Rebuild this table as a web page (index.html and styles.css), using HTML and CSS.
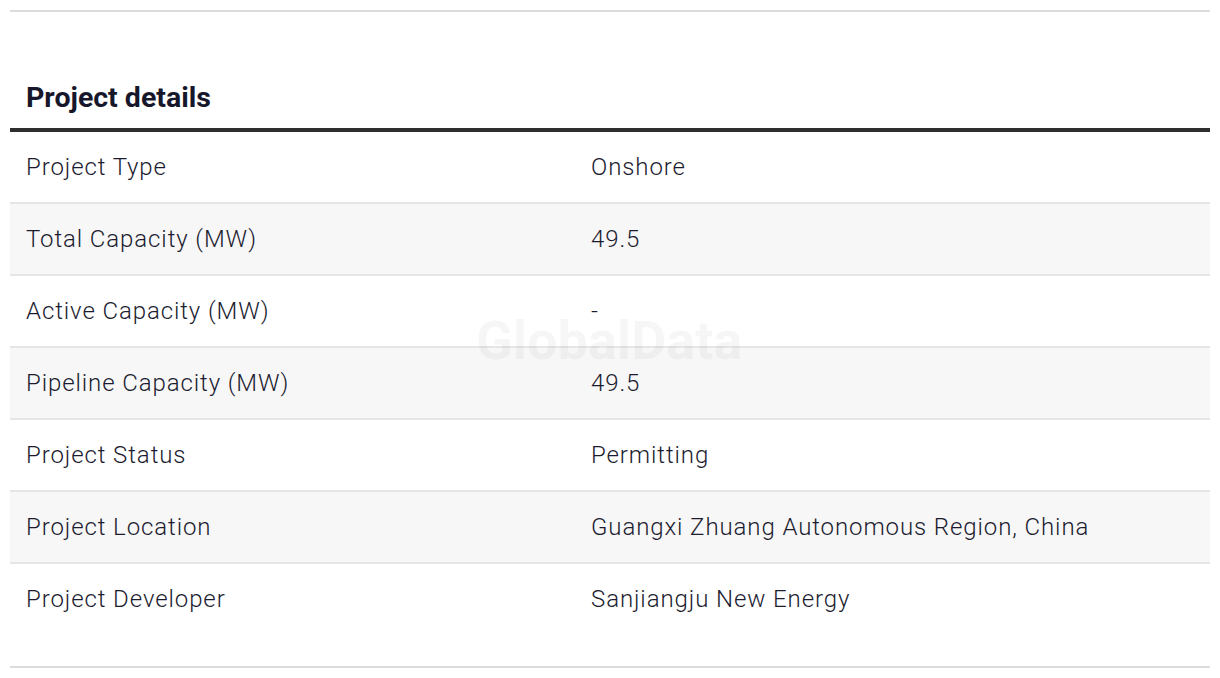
FILE: index.html
```html
<!DOCTYPE html>
<html lang="en">
<head>
<meta charset="utf-8">
<title>Project details</title>
<link rel="stylesheet" href="styles.css">
</head>
<body>
<div class="page">
  <hr class="rule">
  <section class="details">
    <h2 class="title">Project details</h2>
    <div class="table">
      <div class="row"><div class="key">Project Type</div><div class="val">Onshore</div></div>
      <div class="row"><div class="key">Total Capacity (MW)</div><div class="val">49.5</div></div>
      <div class="row"><div class="key">Active Capacity (MW)</div><div class="val">-</div></div>
      <div class="row"><div class="key">Pipeline Capacity (MW)</div><div class="val">49.5</div></div>
      <div class="row"><div class="key">Project Status</div><div class="val">Permitting</div></div>
      <div class="row"><div class="key">Project Location</div><div class="val">Guangxi Zhuang Autonomous Region, China</div></div>
      <div class="row"><div class="key">Project Developer</div><div class="val">Sanjiangju New Energy</div></div>
      <div class="watermark" aria-hidden="true">GlobalData</div>
    </div>
  </section>
  <hr class="rule">
</div>
</body>
</html>
```
FILE: styles.css
```css
html, body {
  margin: 0;
  padding: 0;
  background: #ffffff;
}
body {
  font-family: Roboto, "Liberation Sans", Arial, sans-serif;
  color: #1c1c30;
}
.page {
  padding: 10px 10px 0;
}
.rule {
  margin: 0;
  border: 0;
  height: 2px;
  background: #dcdcdc;
}
.title {
  margin: 69px 0 0;
  padding: 0 16px 13px;
  font-size: 28.5px;
  line-height: 34px;
  font-weight: 700;
  color: #17172c;
  border-bottom: 4px solid #2e2e2e;
}
.table {
  position: relative;
  padding-bottom: 32px;
}
.row {
  display: grid;
  grid-template-columns: 565px 1fr;
  height: 70px;
  align-items: center;
  border-bottom: 2px solid #e6e6e6;
  font-size: 24px;
  line-height: 28px;
  font-weight: 300;
  letter-spacing: 0.9px;
}
.row:nth-child(even) {
  background: #f7f7f7;
}
.row:nth-child(7) {
  border-bottom: 0;
}
.key, .val {
  padding: 0 16px;
}
.watermark {
  position: absolute;
  left: 466px;
  top: 179px;
  font-size: 54px;
  line-height: 60px;
  font-weight: 700;
  color: rgba(0, 0, 0, 0.035);
  pointer-events: none;
}
```
